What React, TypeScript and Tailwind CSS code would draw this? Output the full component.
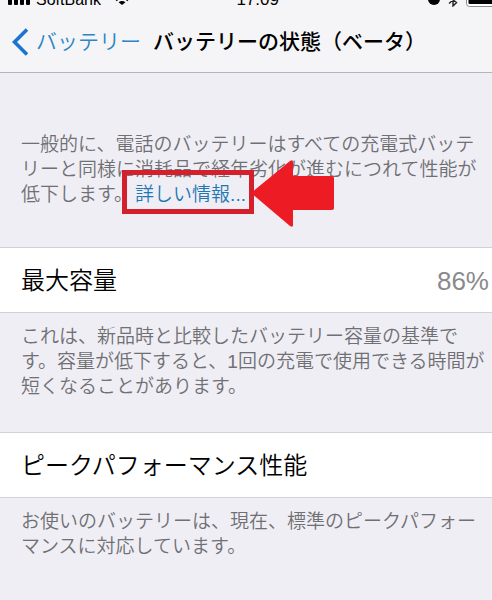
import type { ReactNode } from 'react';

function SignalBars() {
  return (
    <svg className="h-[5px] w-[23px]" viewBox="0 0 23 5" fill="#000" aria-hidden="true">
      <rect x="0" y="-4" width="4" height="9" rx="1" />
      <rect x="6" y="-4" width="4" height="9" rx="1" />
      <rect x="12" y="-4" width="4" height="9" rx="1" />
      <rect x="18" y="-4" width="4" height="9" rx="1" />
    </svg>
  );
}

function WifiIcon() {
  return (
    <svg className="h-[5px] w-4" viewBox="0 0 16 5" aria-hidden="true">
      <path d="M1.5 -1.5L3.5 0.5M14.5 -1.5L12.5 0.5" fill="none" stroke="#000" strokeWidth="2" />
      <path d="M8 5L4.6 2.2C6.4 0.6 9.6 0.6 11.4 2.2Z" fill="#000" />
    </svg>
  );
}

function StatusBar() {
  return (
    <div className="flex h-2 items-end justify-between overflow-hidden pl-2 text-base leading-4 text-black">
      <div className="flex flex-1 items-end gap-[5px]">
        <span className="flex pb-[3px]"><SignalBars /></span>
        <span>SoftBank</span>
        <span className="ml-2 flex pb-[3px]"><WifiIcon /></span>
      </div>
      <span className="text-[17px] font-medium">17:09</span>
      <div className="flex w-[213px] items-end justify-end gap-2">
        <svg className="mb-[3px] h-[5px] w-3" viewBox="0 0 12 5" aria-hidden="true">
          <circle cx="6" cy="-1" r="6" fill="#000" />
        </svg>
        <svg className="mb-px h-[7px] w-[10px]" viewBox="0 0 10 7" aria-hidden="true">
          <path d="M1 3.5L8.5 -3M1 -3L8.5 2.5L5 6V-8" fill="none" stroke="#222" strokeWidth="1.4" />
        </svg>
        <svg className="mb-px h-[7px] w-[26px]" viewBox="0 0 26 7" aria-hidden="true">
          <rect x="0.5" y="-10" width="36" height="16.5" rx="3" fill="#fff" stroke="#8a8a8a" />
          <rect x="2.5" y="-8" width="32" height="12" rx="1" fill="#000" />
        </svg>
      </div>
    </div>
  );
}

function NavBar() {
  return (
    <nav className="flex h-16 items-center gap-3 pl-3 pt-1 text-[21px] leading-7">
      <button type="button" className="flex items-center gap-2 font-[350] text-[#2b86c5]">
        <svg className="h-7 w-4" viewBox="0 0 16 28" fill="none" stroke="#1a75d2" strokeWidth="3.6" aria-hidden="true">
          <path d="M15 1.5L2.5 14L15 26.5" />
        </svg>
        バッテリー
      </button>
      <h1 className="whitespace-nowrap font-medium text-black">バッテリーの状態（ベータ）</h1>
    </nav>
  );
}

function Row({ label, value }: { label: string; value?: string }) {
  return (
    <div className="flex h-[66px] items-center justify-between border-y border-[#d2d1d7] bg-white pl-[21px] pr-[3px] pt-0.5">
      <h2 className="text-2xl font-[350] text-black">{label}</h2>
      {value && <span className="text-[26px] leading-8 text-[#8a8a8c]">{value}</span>}
    </div>
  );
}

function Note({ children }: { children: ReactNode }) {
  return <p className="pl-[21px] pr-[3px] text-[19px] font-[350] leading-[25px] text-[#707074]">{children}</p>;
}

function DetailsLink() {
  return (
    <a href="#details" className="relative ml-0.5 inline-block text-[#1f78b4]">
      詳しい情報...
      <span className="absolute -bottom-[7px] -left-[13px] -right-2 -top-3 border-5 border-[#d4202c]" />
      <svg className="absolute -top-[22px] left-full ml-[5px] h-[67px] w-[83px]" viewBox="0 0 83 67" fill="#ed1c24" aria-hidden="true">
        <path d="M0 33L39 1Q42 -1 42 2V16H81Q83 16 83 18V48Q83 50 81 50H42V65Q42 68 39 66Z" />
      </svg>
    </a>
  );
}

export default function App() {
  return (
    <div
      lang="ja"
      className="min-h-screen overflow-x-hidden bg-[#efeef4] font-['Liberation_Sans','Noto_Sans_CJK_JP',sans-serif]"
    >
      <header className="border-b border-[#b4b4b8] bg-[#f5f5f7]">
        <StatusBar />
        <NavBar />
      </header>

      <main>
        <section className="pb-10 pt-[59px]">
          <Note>
            一般的に、電話のバッテリーはすべての充電式バッテリーと同様に消耗品で経年劣化が進むにつれて性能が低下します。<DetailsLink />
          </Note>
        </section>

        <section className="flex flex-col gap-[11px] pb-[33px]">
          <Row label="最大容量" value="86%" />
          <Note>
            これは、新品時と比較したバッテリー容量の基準です。容量が低下すると、1回の充電で使用できる時間が短くなることがあります。
          </Note>
        </section>

        <section className="flex flex-col gap-[11px]">
          <Row label="ピークパフォーマンス性能" />
          <Note>お使いのバッテリーは、現在、標準のピークパフォーマンスに対応しています。</Note>
        </section>
      </main>
    </div>
  );
}
